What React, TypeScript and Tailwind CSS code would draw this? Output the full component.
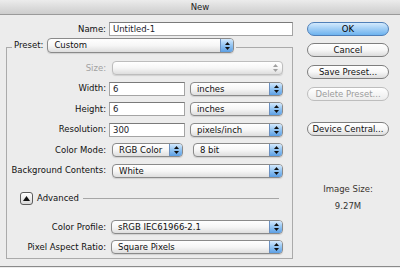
import React from "react";

// Photoshop "New" document dialog, Aqua style

const Arrows = ({ disabled }: { disabled?: boolean }) => (
  <svg width="5" height="8" viewBox="0 0 5 8">
    <polygon points="0,3 2.5,0 5,3" fill={disabled ? "#a0a0a0" : "#111"} />
    <polygon points="0,5 2.5,8 5,5" fill={disabled ? "#a0a0a0" : "#111"} />
  </svg>
);

const Popup = ({
  value,
  className,
  disabled,
}: {
  value?: string;
  className: string;
  disabled?: boolean;
}) => (
  <div
    className={`flex h-[14px] shrink-0 overflow-hidden rounded-[4px] border bg-linear-to-b from-white via-[#f6f6f6] to-[#dedede] shadow-[0_1px_1px_rgba(0,0,0,0.12)] ${
      disabled ? "border-[#bdbdbd]" : "border-[#8a8a8a]"
    } ${className}`}
  >
    <span className="flex-1 truncate pl-[6px] leading-[12px] text-[#111]">{value}</span>
    <span
      className={`flex w-[13px] items-center justify-center ${
        disabled
          ? ""
          : "border-l border-[#6b90c0] bg-linear-to-b from-[#d4e9fc] via-[#92c4f2] to-[#5c9fe4]"
      }`}
    >
      <Arrows disabled={disabled} />
    </span>
  </div>
);

const Field = ({ value, className }: { value: string; className: string }) => (
  <div
    className={`h-[14px] shrink-0 border border-[#a4a4a4] border-t-[#7a7a7a] bg-white pl-[3px] leading-[12px] text-[#1c1c2c] ${className}`}
  >
    {value}
  </div>
);

const Btn = ({
  label,
  primary,
  disabled,
  className = "",
}: {
  label: string;
  primary?: boolean;
  disabled?: boolean;
  className?: string;
}) => (
  <div
    className={`flex h-[14px] w-[82px] items-center justify-center rounded-full border leading-none ${
      primary
        ? "border-[#4f7fb8] bg-linear-to-b from-[#d3eafd] via-[#9fcdf5] to-[#6db3ef] text-black"
        : disabled
          ? "border-[#bdbdbd] bg-linear-to-b from-white to-[#ececec] text-[#9c9c9c]"
          : "border-[#7e7e7e] bg-linear-to-b from-white via-[#f7f7f7] to-[#dcdcdc] text-[#111]"
    } ${className}`}
  >
    {label}
  </div>
);

const Row = ({ label, children, muted }: { label: string; children: React.ReactNode; muted?: boolean }) => (
  <div className="flex h-[14px] items-center">
    <span className={`w-[99px] shrink-0 text-right ${muted ? "text-[#a2a2a2]" : "text-[#111]"}`}>{label}</span>
    {children}
  </div>
);

const App = () => {
  return (
    <div className="h-[268px] w-[400px] overflow-hidden bg-[#ececec] font-['DejaVu_Sans',sans-serif] text-[8.5px] text-black">
      {/* title bar */}
      <div className="flex h-[15px] items-center justify-center border-b border-[#9a9a9a] bg-linear-to-b from-[#ececec] to-[#cdcdcd] text-[#222]">
        New
      </div>

      <div className="flex h-[252px] border-b border-[#8a8a8a]">
        {/* left side */}
        <div className="w-[300px]">
          <div className="mt-[7px] flex h-[14px] items-center">
            <span className="w-[106px] shrink-0 text-right text-[#111]">Name:</span>
            <Field value="Untitled-1" className="ml-[3px] w-[184px]" />
          </div>

          <fieldset className="ml-[6px] mt-[2px] w-[287px] border border-[#aaaaaa] pb-[4px]">
            <legend className="ml-[5px] flex h-[18px] items-start px-[2px]">
              <span className="leading-[15px] text-[#111]">Preset:</span>
              <Popup value="Custom" className="ml-[4px] h-[15px] w-[187px]" />
            </legend>

            <div className="flex flex-col gap-[6.5px] pt-[5px]">
              <Row label="Size:" muted>
                <Popup disabled className="ml-[6px] w-[171px]" />
              </Row>
              <Row label="Width:">
                <Field value="6" className="ml-[3px] w-[76px]" />
                <Popup value="inches" className="ml-[5px] w-[93px]" />
              </Row>
              <Row label="Height:">
                <Field value="6" className="ml-[3px] w-[76px]" />
                <Popup value="inches" className="ml-[5px] w-[93px]" />
              </Row>
              <Row label="Resolution:">
                <Field value="300" className="ml-[3px] w-[76px]" />
                <Popup value="pixels/inch" className="ml-[5px] w-[93px]" />
              </Row>
              <Row label="Color Mode:">
                <Popup value="RGB Color" className="ml-[6px] w-[71px]" />
                <Popup value="8 bit" className="ml-[10px] w-[90px]" />
              </Row>
              <Row label="Background Contents:">
                <Popup value="White" className="ml-[6px] w-[171px]" />
              </Row>
            </div>

            <div className="mt-[13.5px] flex h-[14px] items-center">
              <div className="ml-[13px] flex h-[13px] w-[13px] items-center justify-center rounded-[3px] border border-[#5c5c5c] bg-linear-to-b from-white to-[#d8d8d8]">
                <svg width="7" height="5" viewBox="0 0 7 5">
                  <polygon points="0,5 3.5,0 7,5" fill="#111" />
                </svg>
              </div>
              <span className="ml-[4px] text-[#111]">Advanced</span>
              <div className="ml-[4px] mr-[13px] h-px flex-1 bg-[#a6a6a6]" />
            </div>

            <div className="mt-[15px] flex flex-col gap-[6px]">
              <Row label="Color Profile:">
                <Popup value="sRGB IEC61966-2.1" className="ml-[5px] w-[172px]" />
              </Row>
              <Row label="Pixel Aspect Ratio:">
                <Popup value="Square Pixels" className="ml-[5px] w-[172px]" />
              </Row>
            </div>
          </fieldset>
        </div>

        {/* right side */}
        <div className="ml-[7px] flex w-[82px] flex-col items-center pt-[7px]">
          <Btn label="OK" primary />
          <Btn label="Cancel" className="mt-[7px]" />
          <Btn label="Save Preset..." className="mt-[8px]" />
          <Btn label="Delete Preset..." disabled className="mt-[8px]" />
          <Btn label="Device Central..." className="mt-[21px]" />
          <div className="mt-[47.5px] leading-[11px] text-[#3b3530]">Image Size:</div>
          <div className="mt-[6px] leading-[11px] text-[#333]">9.27M</div>
        </div>
      </div>
    </div>
  );
};

export default App;
